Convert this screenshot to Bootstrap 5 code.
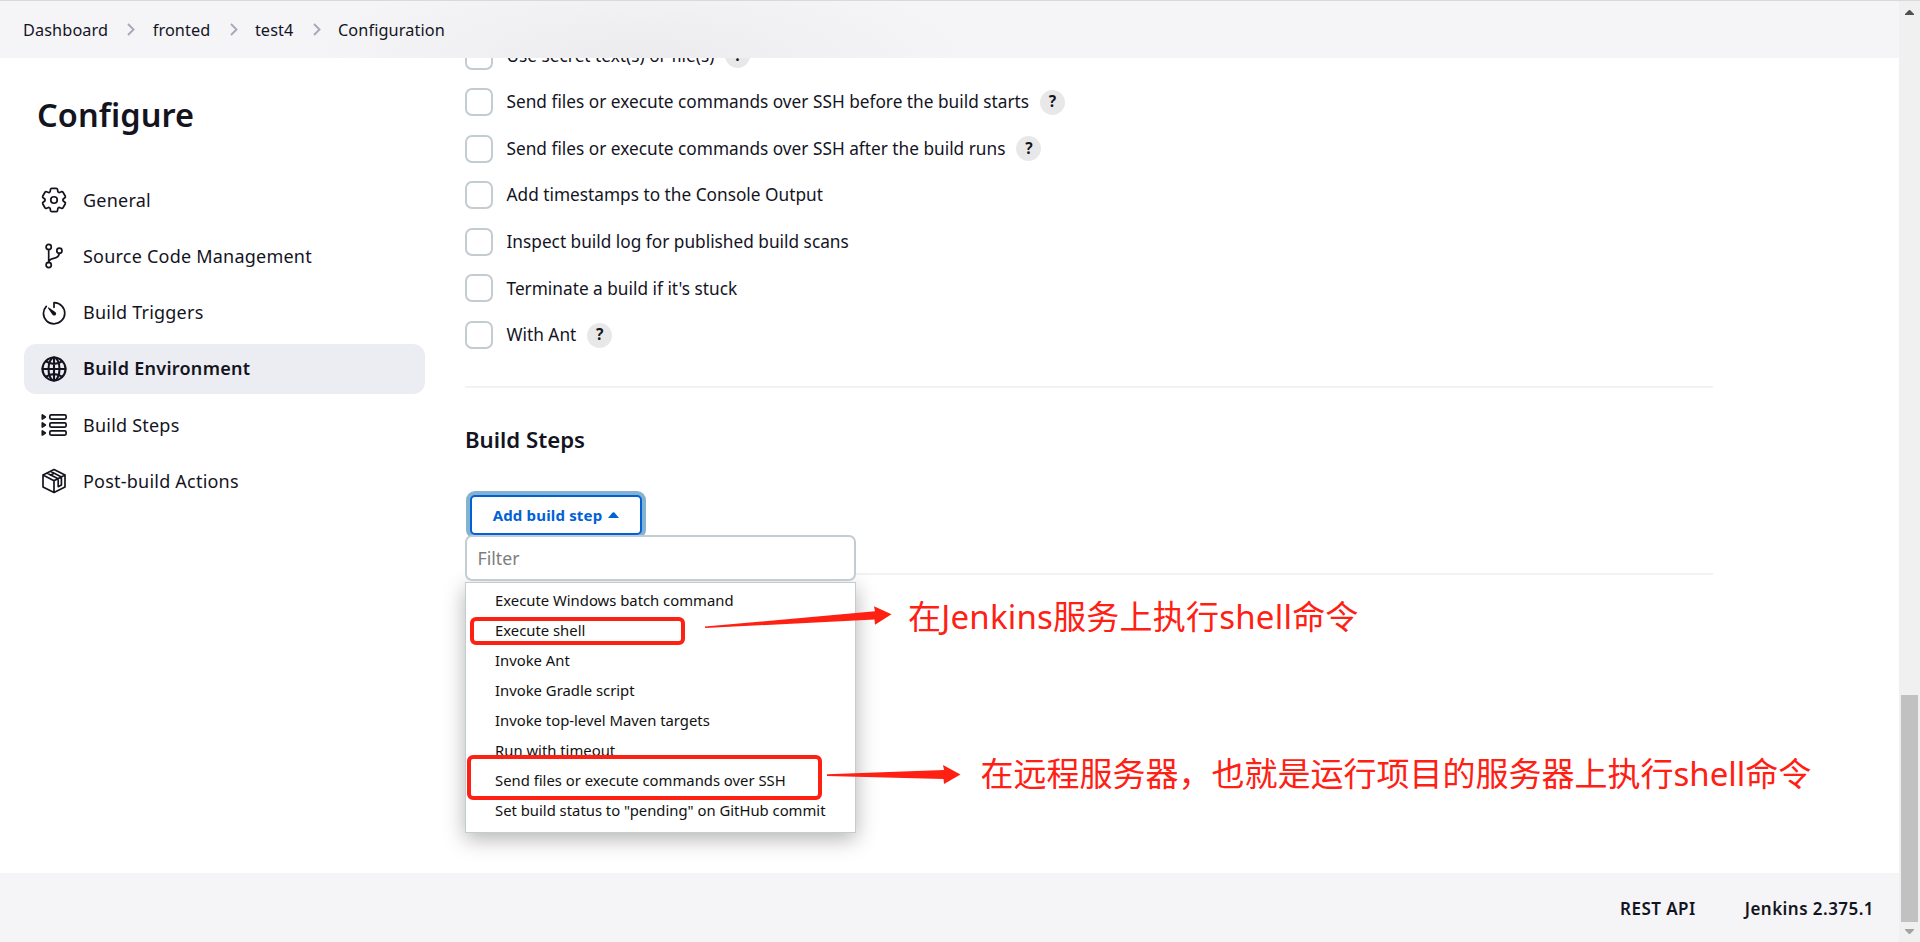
<!DOCTYPE html>
<html lang="en">
<head>
<meta charset="utf-8">
<meta name="viewport" content="width=device-width, initial-scale=1">
<title>test4 Config [Jenkins]</title>
<link href="https://cdn.jsdelivr.net/npm/bootstrap@5.3.0/dist/css/bootstrap.min.css" rel="stylesheet">
<style>
  :root { --ink: #14141f; --line: #c3ccd1; --soft: #f5f5f7; --mark: #ff2014; }
  body { font-family: "Noto Sans", "Noto Sans CJK SC", sans-serif; color: var(--ink); height: 942px; }
  .page-header { height: 58px; border-top: 1px solid #d9d9dd; padding-left: 23px; font-size: 16.3px; z-index: 3;
    background: radial-gradient(ellipse 330px 90px at 640px 100%, #ececee 0%, #f0f0f3 45%, #f5f5f8 100%); }
  .page-header span { line-height: 24px; letter-spacing: .1px; }
  .crumb-sep { width: 44.5px; padding-left: 2px; }
  .crumb-sep svg { width: 8px; height: 13px; }
  .side { width: 425px; padding: 33px 0 0 24px; }
  .side h1 { font-size: 32.5px; font-weight: 600; line-height: 48px; margin: 0 0 36px 13px; letter-spacing: .1px; }
  .task { height: 50px; margin-bottom: 6.3px; padding-left: 17px; border-radius: 12px; font-size: 18px; letter-spacing: .22px; }
  .task.on { background: #ecedf3; font-weight: 600; letter-spacing: .28px; }
  .task svg { width: 26px; height: 26px; margin-right: 16px; fill: none; stroke: var(--ink); stroke-width: 1.7; stroke-linejoin: round; stroke-linecap: round; }
  .content-col { margin-left: 40px; width: 1248px; }
  .opts { margin-top: -16.5px; padding-bottom: 18.3px; }
  .opt { height: 28px; margin-bottom: 18.6px; font-size: 17.25px; }
  .box { width: 28px; height: 28px; border: 2px solid var(--line); border-radius: 7px; margin-right: 13.5px; }
  .help { width: 25px; height: 25px; border-radius: 50%; background: #e8e8e8; font-size: 15.5px; font-weight: 700; margin-left: 11px; }
  .rule { height: 2px; background: #f1f1f6; }
  .section-title { font-size: 22.2px; font-weight: 600; line-height: 32px; margin: 36px 0 35px; }
  .add-area { padding: 4px 0 0 5px; }
  .add-btn { width: 172px; height: 40px; padding: 0; border: 2px solid #0062d6; border-radius: 5px; color: #0062d6; font-size: 15px; font-weight: 700; letter-spacing: .17px; background: #fff; box-shadow: 0 0 0 4px #84b3cf; }
  .add-btn svg { width: 11px; height: 6px; margin-left: 6px; }
  .drop { top: 44px; left: 0; width: 391px; z-index: 2; }
  .filter { height: 46px; border: 2px solid var(--line); border-radius: 7px; background: #fff; padding-left: 10.5px; font-size: 17.7px; color: #7d7d7d; margin-bottom: 1px; position: relative; }
  .menu-list { height: 251px; border: 1px solid var(--line); background: #fff; padding: 3px 0 0 29px; box-shadow: 0 6px 20px rgba(0,0,0,.3); font-size: 14.83px; color: #111; }
  .menu-list li { height: 30.05px; line-height: 29px; }
  .end-rule { margin-top: 38px; }
  .page-footer { height: 69px; background: var(--soft); padding: 2px 25px 0 0; font-weight: 600; font-size: 17px; letter-spacing: .45px; gap: 49px; }
  .scroll-col { width: 21px; background: #f0f0f0; border-top: 1px solid #d9d9dd; }
  .thumb { width: 17px; height: 227px; background: #c1c1c1; }
  .frame { border: 4px solid var(--mark); border-radius: 6px; }
  .note { color: var(--mark); font-size: 33px; line-height: 44px; white-space: nowrap; }
  .ink-layer { inset: 0; z-index: 5; pointer-events: none; }
</style>
</head>
<body class="d-flex overflow-hidden position-relative bg-white">

<div class="flex-grow-1 d-flex flex-column">
  <header class="page-header d-flex align-items-center flex-shrink-0 position-relative">
    <span>Dashboard</span>
    <i class="crumb-sep d-flex justify-content-center"><svg viewBox="0 0 8 13" fill="none" stroke="#a9a7ba" stroke-width="1.9"><path d="M1 1l5.5 5.5L1 12"/></svg></i>
    <span>fronted</span>
    <i class="crumb-sep d-flex justify-content-center"><svg viewBox="0 0 8 13" fill="none" stroke="#a9a7ba" stroke-width="1.9"><path d="M1 1l5.5 5.5L1 12"/></svg></i>
    <span>test4</span>
    <i class="crumb-sep d-flex justify-content-center"><svg viewBox="0 0 8 13" fill="none" stroke="#a9a7ba" stroke-width="1.9"><path d="M1 1l5.5 5.5L1 12"/></svg></i>
    <span>Configuration</span>
  </header>

  <main class="d-flex flex-grow-1">
    <nav class="side">
      <h1>Configure</h1>
      <div class="task d-flex align-items-center">
        <svg viewBox="0 0 512 512" style="stroke-width:34"><circle cx="256" cy="256" r="64"/><path d="M470.39 300l-.47-.38-31.56-24.75a16.11 16.11 0 01-6.1-13.33v-11.56a16 16 0 016.11-13.22L469.92 212l.47-.38a26.68 26.68 0 005.9-34.06l-42.71-73.9a1.59 1.59 0 01-.13-.22A26.86 26.86 0 00401 92.14l-.35.13-37.1 14.93a15.94 15.94 0 01-14.47-1.29q-4.92-3.1-10-5.86a15.94 15.94 0 01-8.19-11.82l-5.59-39.59-.12-.72A27.22 27.22 0 00298.76 26h-85.52a26.92 26.92 0 00-26.45 22.39l-.09.56-5.57 39.67a16 16 0 01-8.13 11.82 175.21 175.21 0 00-10 5.82 15.92 15.92 0 01-14.43 1.27l-37.13-15-.35-.14a26.87 26.87 0 00-32.48 11.34l-.13.22-42.77 73.95a26.71 26.71 0 005.9 34.1l.47.38 31.56 24.75a16.11 16.11 0 016.1 13.33v11.56a16 16 0 01-6.11 13.22L42.08 300l-.47.38a26.68 26.68 0 00-5.9 34.06l42.71 73.9a1.59 1.59 0 01.13.22 26.86 26.86 0 0032.45 11.3l.35-.13 37.07-14.93a15.94 15.94 0 0114.47 1.29q4.92 3.11 10 5.86a15.94 15.94 0 018.19 11.82l5.56 39.59.12.72A27.22 27.22 0 00213.24 486h85.52a26.92 26.92 0 0026.45-22.39l.09-.56 5.57-39.67a16 16 0 018.18-11.82c3.42-1.84 6.76-3.79 10-5.82a15.92 15.92 0 0114.43-1.27l37.13 14.95.35.14a26.85 26.85 0 0032.48-11.34 2.53 2.53 0 01.13-.22l42.71-73.89a26.7 26.7 0 00-5.89-34.11z"/></svg>
        <span>General</span></div>
      <div class="task d-flex align-items-center">
        <svg viewBox="0 0 26 26"><circle cx="7.7" cy="3.9" r="2.6"/><circle cx="18.4" cy="7.7" r="2.6"/><circle cx="7.7" cy="22" r="2.6"/><path d="M7.7 6.5v12.9M18.2 10.3c-.2 3.4-2.6 4.6-5.5 5.1-3 .5-4.9 1.5-5 4"/></svg>
        <span>Source Code Management</span></div>
      <div class="task d-flex align-items-center">
        <svg viewBox="0 0 512 512" style="stroke-width:34"><path d="M104 124A205 205 0 0048 262c2 118 92 206 208 206 115 0 212-92 212-208C468 148 378 54 262 50q-6 0-6 6v88"/><path fill="#14141f" stroke="none" d="M226 290l-88-127c-6-10 5-22 16-16l127 88a38 38 0 01-43 64 36 36 0 01-12-9z"/></svg>
        <span>Build Triggers</span></div>
      <div class="task on d-flex align-items-center">
        <svg viewBox="0 0 26 26" style="stroke-width:2.1"><circle cx="13" cy="13" r="11.5"/><ellipse cx="13" cy="13" rx="5.5" ry="11.5"/><path d="M13 1.5v23M1.500 13h23M5 5.300c5 3.300 11 3.300 16 0M5 20.700c5-3.300 11-3.300 16 0"/></svg>
        <span>Build Environment</span></div>
      <div class="task d-flex align-items-center">
        <svg viewBox="0 0 26 26"><path d="M1.300 3v4l3-2zM1.300 11v4l3-2zM1.300 19v4l3-2z"/><rect x="8.800" y="2.900" width="16.300" height="4.200" rx="1.300"/><rect x="8.800" y="10.900" width="16.300" height="4.200" rx="1.300"/><rect x="8.800" y="18.900" width="16.300" height="4.200" rx="1.300"/></svg>
        <span>Build Steps</span></div>
      <div class="task d-flex align-items-center">
        <svg viewBox="0 0 26 26"><path d="M13 1.500L24 7v12L13 24.500 2 19V7zM2 7l11 5.700L24 7M13 12.700v11.800M9.400 3.300L20.400 9v8l-3.200 1.700v-8L5.800 5.100M13 5.200l-3.600 2"/></svg>
        <span>Post-build Actions</span></div>
    </nav>

    <section class="content-col">
      <div class="opts">
        <div class="opt d-flex align-items-center"><span class="box"></span><span>Use secret text(s) or file(s)</span><span class="help d-flex align-items-center justify-content-center">?</span></div>
        <div class="opt d-flex align-items-center"><span class="box"></span><span>Send files or execute commands over SSH before the build starts</span><span class="help d-flex align-items-center justify-content-center">?</span></div>
        <div class="opt d-flex align-items-center"><span class="box"></span><span>Send files or execute commands over SSH after the build runs</span><span class="help d-flex align-items-center justify-content-center">?</span></div>
        <div class="opt d-flex align-items-center"><span class="box"></span><span>Add timestamps to the Console Output</span></div>
        <div class="opt d-flex align-items-center"><span class="box"></span><span>Inspect build log for published build scans</span></div>
        <div class="opt d-flex align-items-center"><span class="box"></span><span>Terminate a build if it's stuck</span></div>
        <div class="opt d-flex align-items-center"><span class="box"></span><span>With Ant</span><span class="help d-flex align-items-center justify-content-center">?</span></div>
      </div>
      <div class="rule"></div>
      <h2 class="section-title">Build Steps</h2>
      <div class="position-relative add-area">
        <button type="button" class="add-btn d-flex align-items-center justify-content-center">Add build step<svg viewBox="0 0 11 6"><path fill="#0062d6" d="M0 6L4.600.6q.9-.9 1.800 0L11 6z"/></svg></button>
        <div class="drop position-absolute">
          <div class="filter d-flex align-items-center">Filter</div>
          <ul class="menu-list list-unstyled mb-0">
            <li>Execute Windows batch command</li>
            <li>Execute shell</li>
            <li>Invoke Ant</li>
            <li>Invoke Gradle script</li>
            <li>Invoke top-level Maven targets</li>
            <li>Run with timeout</li>
            <li>Send files or execute commands over SSH</li>
            <li>Set build status to "pending" on GitHub commit</li>
          </ul>
        </div>
      </div>
      <div class="rule end-rule"></div>
    </section>
  </main>

  <footer class="page-footer d-flex align-items-center justify-content-end flex-shrink-0">
    <span>REST API</span><span>Jenkins 2.375.1</span>
  </footer>
</div>

<div class="scroll-col d-flex flex-column align-items-center flex-shrink-0">
  <svg width="9" height="5" viewBox="0 0 9 5" style="margin-top:9px"><path fill="#505050" d="M4 0h1l4 4v1H0V4z"/></svg>
  <div class="thumb mt-auto"></div>
  <svg width="9" height="5" viewBox="0 0 9 5" style="margin:7px 0 8px"><path fill="#a3a3a3" d="M0 0h9v1L5 5H4L0 1z"/></svg>
</div>

<!-- hand-drawn annotations over the open menu -->
<div class="ink-layer position-absolute">
  <div class="frame position-absolute" style="left:470px;top:617px;width:215px;height:28px"></div>
  <div class="frame position-absolute" style="left:467px;top:755px;width:355px;height:45px"></div>
  <svg class="position-absolute top-0 start-0" width="1920" height="942" fill="#ff2014"><path d="M705 626.500l170-15.200-1-5 17.500 8-16.500 10.500-.5-5.300L705 628z"/><path d="M827 774.200l117-4.200-1-5 17.500 9.600L944 784l-.5-5L827 776z"/></svg>
  <div class="note position-absolute" style="left:908px;top:594.5px;letter-spacing:.22px">在Jenkins服务上执行shell命令</div>
  <div class="note position-absolute" style="left:980.5px;top:752px">在远程服务器，也就是运行项目的服务器上执行shell命令</div>
</div>

<script src="https://cdn.jsdelivr.net/npm/bootstrap@5.3.0/dist/js/bootstrap.bundle.min.js"></script>
</body>
</html>
